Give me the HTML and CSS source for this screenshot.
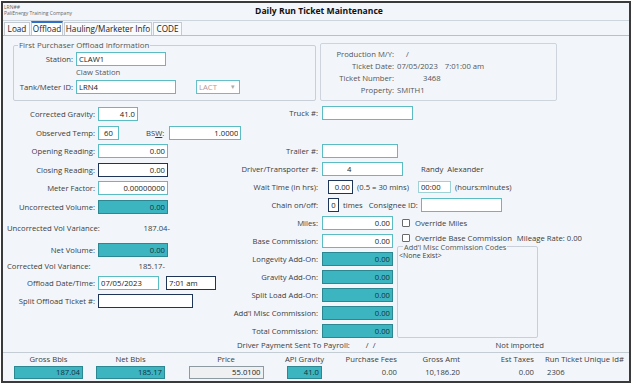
FILE: index.html
```html
<!DOCTYPE html>
<html lang="en">
<head>
	<meta charset="UTF-8">
	<title>Daily Run Ticket Maintenance</title>
	<link rel="stylesheet" href="styles.css">
</head>
<body>
	<div class="win">
		<div class="head">
			<div class="co">
				<p class="code">LRN##</p>
				<p>PaliEnergy Training Company</p>
			</div>
			<div class="title">Daily Run Ticket Maintenance</div>
		</div>

		<div class="tabs">
			<span class="tab">Load</span>
			<span class="tab on">Offload</span>
			<span class="tab">Hauling/Marketer Info</span>
			<span class="tab">CODE</span>
		</div>

		<div class="page">
			<div class="top">
				<fieldset class="grp">
					<legend>First Purchaser Offload Information</legend>
					<div class="grow">
						<label class="glab">Station:</label>
						<input class="fld w90" type="text" value="CLAW1">
					</div>
					<div class="grow sub">Claw Station</div>
					<div class="grow tall">
						<label class="glab">Tank/Meter ID:</label>
						<input class="fld w100" type="text" value="LRN4">
						<div class="drop">LACT<span class="arr">&#9662;</span></div>
					</div>
				</fieldset>

				<div class="info">
					<div class="irow"><span class="ilab">Production M/Y:</span><span class="ival pm">/</span></div>
					<div class="irow"><span class="ilab">Ticket Date:</span><span class="ival">07/05/2023</span><span class="ival tm">7:01:00 am</span></div>
					<div class="irow"><span class="ilab">Ticket Number:</span><span class="ival tn">3468</span></div>
					<div class="irow"><span class="ilab">Property:</span><span class="ival">SMITH1</span></div>
				</div>
			</div>

			<div class="body">
				<div class="lcol">
					<div class="row">
						<label class="lab">Corrected Gravity:</label>
						<input class="fld num w40" type="text" value="41.0">
					</div>
					<div class="row">
						<label class="lab">Observed Temp:</label>
						<input class="fld mid w21" type="text" value="60">
						<label class="bsw">BS<u>W</u>:</label>
						<input class="fld num w72" type="text" value="1.0000">
					</div>
					<div class="row">
						<label class="lab">Opening Reading:</label>
						<input class="fld num w70" type="text" value="0.00">
					</div>
					<div class="row">
						<label class="lab">Closing Reading:</label>
						<input class="fld num w70 dark" type="text" value="0.00">
					</div>
					<div class="row">
						<label class="lab">Meter Factor:</label>
						<input class="fld num w70" type="text" value="0.00000000">
					</div>
					<div class="row">
						<label class="lab">Uncorrected Volume:</label>
						<input class="fld num w70 teal" type="text" value="0.00">
					</div>
					<div class="var v1">
						<span>Uncorrected Vol Variance:</span>
						<span class="vnum">187.04-</span>
					</div>
					<div class="row">
						<label class="lab">Net Volume:</label>
						<input class="fld num w70 teal" type="text" value="0.00">
					</div>
					<div class="var v2">
						<span>Corrected Vol Variance:</span>
						<span class="vnum n2">185.17-</span>
					</div>
					<div class="row">
						<label class="lab">Offload Date/Time:</label>
						<input class="fld w61" type="text" value="07/05/2023">
						<input class="fld w50 dark tme" type="text" value="7:01 am">
					</div>
					<div class="row">
						<label class="lab">Split Offload Ticket #:</label>
						<input class="fld w95 dark" type="text" value="">
					</div>
				</div>

				<div class="mcol">
					<div class="row">
						<label class="mlab">Truck #:</label>
						<input class="fld w91" type="text" value="">
					</div>
					<div class="row gap"></div>
					<div class="row">
						<label class="mlab">Trailer #:</label>
						<input class="fld w76" type="text" value="">
					</div>
					<div class="row">
						<label class="mlab">Driver/Transporter #:</label>
						<input class="fld w81 drv" type="text" value="4">
						<span class="dname">Randy&nbsp; Alexander</span>
					</div>
					<div class="row">
						<label class="mlab">Wait Time (in hrs):</label>
						<input class="fld num w25 dark ind" type="text" value="0.00">
						<span class="note">(0.5 = 30 mins)</span>
						<input class="fld hm" type="text" value="00:00">
						<span class="note">(hours:minutes)</span>
					</div>
					<div class="row">
						<label class="mlab">Chain on/off:</label>
						<input class="fld mid w11 dark ind" type="text" value="0">
						<span class="note">times</span>
						<span class="cons">Consignee ID:</span>
						<input class="fld w81" type="text" value="">
					</div>
					<div class="row">
						<label class="mlab">Miles:</label>
						<input class="fld num w71" type="text" value="0.00">
						<label class="chk"><input type="checkbox">Override Miles</label>
					</div>
					<div class="row">
						<label class="mlab">Base Commission:</label>
						<input class="fld num w71" type="text" value="0.00">
						<div class="up">
							<label class="chk"><input type="checkbox">Override Base Commission</label>
							<span class="rate">Mileage Rate: 0.00</span>
						</div>
					</div>
					<div class="adds">
						<div class="arows">
							<div class="row">
								<label class="mlab">Longevity Add-On:</label>
								<input class="fld num w71 teal" type="text" value="0.00">
							</div>
							<div class="row">
								<label class="mlab">Gravity Add-On:</label>
								<input class="fld num w71 teal" type="text" value="0.00">
							</div>
							<div class="row">
								<label class="mlab">Split Load Add-On:</label>
								<input class="fld num w71 teal" type="text" value="0.00">
							</div>
							<div class="row">
								<label class="mlab">Add'l Misc Commission:</label>
								<input class="fld num w71 teal" type="text" value="0.00">
							</div>
							<div class="row">
								<label class="mlab">Total Commission:</label>
								<input class="fld num w71 teal" type="text" value="0.00">
							</div>
						</div>
						<fieldset class="codes">
							<legend>Add'l Misc Commission Codes</legend>
							<p>&lt;None Exist&gt;</p>
						</fieldset>
					</div>
				</div>
			</div>

			<div class="pay">
				<span>Driver Payment Sent To Payroll:</span>
				<span class="pdate">/ &nbsp;/</span>
				<span class="imp">Not imported</span>
			</div>
		</div>

		<div class="sum">
			<div class="sc">
				<p>Gross Bbls</p>
				<div class="box teal w69">187.04</div>
			</div>
			<div class="sc c2">
				<p>Net Bbls</p>
				<div class="box teal w69">185.17</div>
			</div>
			<div class="sc c3">
				<p>Price</p>
				<div class="box gray w75">55.0100</div>
			</div>
			<div class="sc c4">
				<p>API Gravity</p>
				<div class="box teal w35">41.0</div>
			</div>
			<div class="sc rt c5">
				<p>Purchase Fees</p>
				<div class="plain">0.00</div>
			</div>
			<div class="sc rt c6">
				<p>Gross Amt</p>
				<div class="plain">10,186.20</div>
			</div>
			<div class="sc rt c7">
				<p>Est Taxes</p>
				<div class="plain">0.00</div>
			</div>
			<div class="sc lt">
				<p>Run Ticket Unique Id#</p>
				<div class="plain uid">2306</div>
			</div>
		</div>
	</div>
</body>
</html>
```

FILE: styles.css
```css
*{margin:0;padding:0;box-sizing:border-box;}
body{background:#fff;font-family:"Open Sans",sans-serif;font-size:7.7px;color:#3c3c3c;}
input{font-family:inherit;font-size:inherit;color:inherit;outline:none;}

.win{margin:1px 0 0 1px;width:630px;height:382px;border:2px solid #3a3a3a;background:#f2f6fb;display:flex;flex-direction:column;}

/* header */
.head{height:18px;flex:none;display:grid;grid-template-columns:1fr auto 1fr;border-bottom:1px solid #cdd5dd;}
.co{padding:0 0 0 1px;font-size:5px;line-height:6px;color:#666;}
.co .code{padding-top:1px;}
.title{font-size:8.6px;font-weight:bold;color:#111;line-height:17px;padding-left:6px;}

/* tabs */
.tabs{height:15px;flex:none;display:flex;align-items:flex-end;padding-left:1px;border-bottom:1px solid #b8c1ca;}
.tab{height:13px;line-height:12px;font-size:8.2px;color:#222;border:1px solid #c3cad2;border-bottom:none;background:#f8fafc;margin-right:1px;text-align:center;}
.tab:nth-child(1){width:26px;}
.tab:nth-child(2){width:32px;}
.tab:nth-child(3){width:88px;}
.tab:nth-child(4){width:29px;}
.tab.on{height:14px;border-top:2px solid #2f6fc4;background:#fff;line-height:11px;}

/* tab page */
.page{height:317px;flex:none;display:flex;flex-direction:column;border-bottom:1px solid #c4ccd4;}
.top{height:65px;flex:none;display:flex;align-items:flex-end;padding-left:10px;}

fieldset{border:1px solid #c8cfd7;border-radius:2px;}
legend{padding:0 1px;line-height:10px;color:#555;}
.grp{width:303px;height:61px;}
.grp legend{margin-left:4px;font-size:7.9px;}
.grow{display:flex;align-items:center;height:15px;margin-top:1px;}
.grow.sub{height:12px;margin-top:0;padding-left:62px;color:#555;}
.grow.tall{height:16px;}
.glab{width:59px;text-align:right;margin-right:3px;}
.drop{width:44px;height:14px;margin-left:20px;border:1px solid #67c0c7;background:#fff;color:#b39a9a;padding-left:2px;line-height:12px;display:flex;justify-content:space-between;}
.drop .arr{color:#aaa;font-size:7px;padding-right:4px;}

.info{width:237px;height:58px;margin-left:4px;border:1px solid #cdd4dc;border-radius:2px;padding:4px 0 0 0;}
.irow{height:12px;line-height:12px;display:flex;color:#555;}
.ilab{width:73px;text-align:right;margin-right:3px;}
.ival.pm{padding-left:9px;}
.ival.tm{margin-left:7px;}
.ival.tn{padding-left:26px;}

/* fields */
.fld{height:14px;border:1px solid #5cbcc4;background:#fff;padding:0 2px;color:#222;}
.fld.num{text-align:right;}
.fld.mid{text-align:center;padding:0;}
.fld.dark{border:1.5px solid #1f3558;}
.fld.teal{background:#3db5c0;border:1px solid #2b8791;color:#16323d;}
.w11{width:11px;}
.w21{width:21px;}
.w25{width:25px;}
.w40{width:40px;}
.w50{width:50px;}
.w61{width:61px;}
.w70{width:70px;}
.w71{width:71px;}
.w72{width:72px;}
.w76{width:76px;}
.w81{width:81px;}
.w90{width:90px;}
.w91{width:91px;}
.w95{width:95px;}
.w100{width:100px;}

.body{height:237px;flex:none;display:flex;}
.row{display:flex;align-items:center;flex:none;}

.lcol{width:225px;flex:none;padding-top:3.75px;}
.lcol .row{height:18.5px;}
.lab{width:92px;text-align:right;margin-right:3px;flex:none;}
.bsw{margin-left:27px;margin-right:5px;}
.var{display:flex;align-items:center;width:167px;justify-content:space-between;padding-left:4px;}
.var.v1{height:24.5px;}
.var.v2{height:14.5px;}
.vnum.n2{margin-right:5px;}
.tme{margin-left:7px;}

.mcol{flex:1;padding-top:3px;}
.mcol .row{height:18px;}
.mcol .row.gap{height:19.5px;}
.mlab{width:90px;text-align:right;margin-right:4px;flex:none;}
.drv{padding-left:24px;}
.dname{margin-left:18px;}
.ind{margin-left:6px;}
.note{margin-left:4px;}
.hm{width:33px;height:12px;margin-left:9px;border-color:#9fd2d7;}
.cons{margin-left:6px;margin-right:3px;}
.chk{display:flex;align-items:center;margin-left:9px;}
.chk input{appearance:none;width:8px;height:8px;border:1px solid #6a6a6a;border-radius:1px;background:#fff;margin-right:5px;}
.up{display:flex;align-items:center;margin-bottom:6px;}
.rate{margin-left:5px;}

.adds{display:flex;}
.arows{width:165px;flex:none;}
.codes{width:141px;height:96px;margin:-8px 0 0 4px;padding:0 1px;}
.codes legend{margin-left:4px;font-size:7.4px;}
.codes p{font-size:7px;line-height:10px;margin-top:-1px;}

.pay{height:14px;display:flex;align-items:center;padding-left:234px;}
.pdate{margin-left:16px;}
.imp{margin-left:120px;}

/* summary strip */
.sum{flex:1;display:flex;padding:1px 0 0 5px;}
.sc{display:flex;flex-direction:column;align-items:center;width:81px;flex:none;white-space:nowrap;}
.sc p{height:10px;line-height:10px;}
.sc.c2{width:83px;}
.sc.c3{width:108px;}
.sc.c4{width:49px;}
.sc.rt{align-items:flex-end;}
.sc.c5{width:68px;}
.sc.c6{width:63px;}
.sc.c7{width:74px;}
.sc.lt{align-items:flex-start;padding-left:11px;flex:1;width:auto;}
.box{height:13px;margin-top:2px;line-height:11px;text-align:right;padding-right:2px;}
.box.teal{background:#3db5c0;border:1px solid #2b8791;color:#16323d;}
.box.gray{background:#eef0f1;border:1px solid #8e9aa2;color:#222;}
.w69{width:69px;}
.w75{width:75px;}
.w35{width:35px;}
.plain{margin-top:2px;line-height:13px;}
.plain.uid{padding-left:2px;}
```
